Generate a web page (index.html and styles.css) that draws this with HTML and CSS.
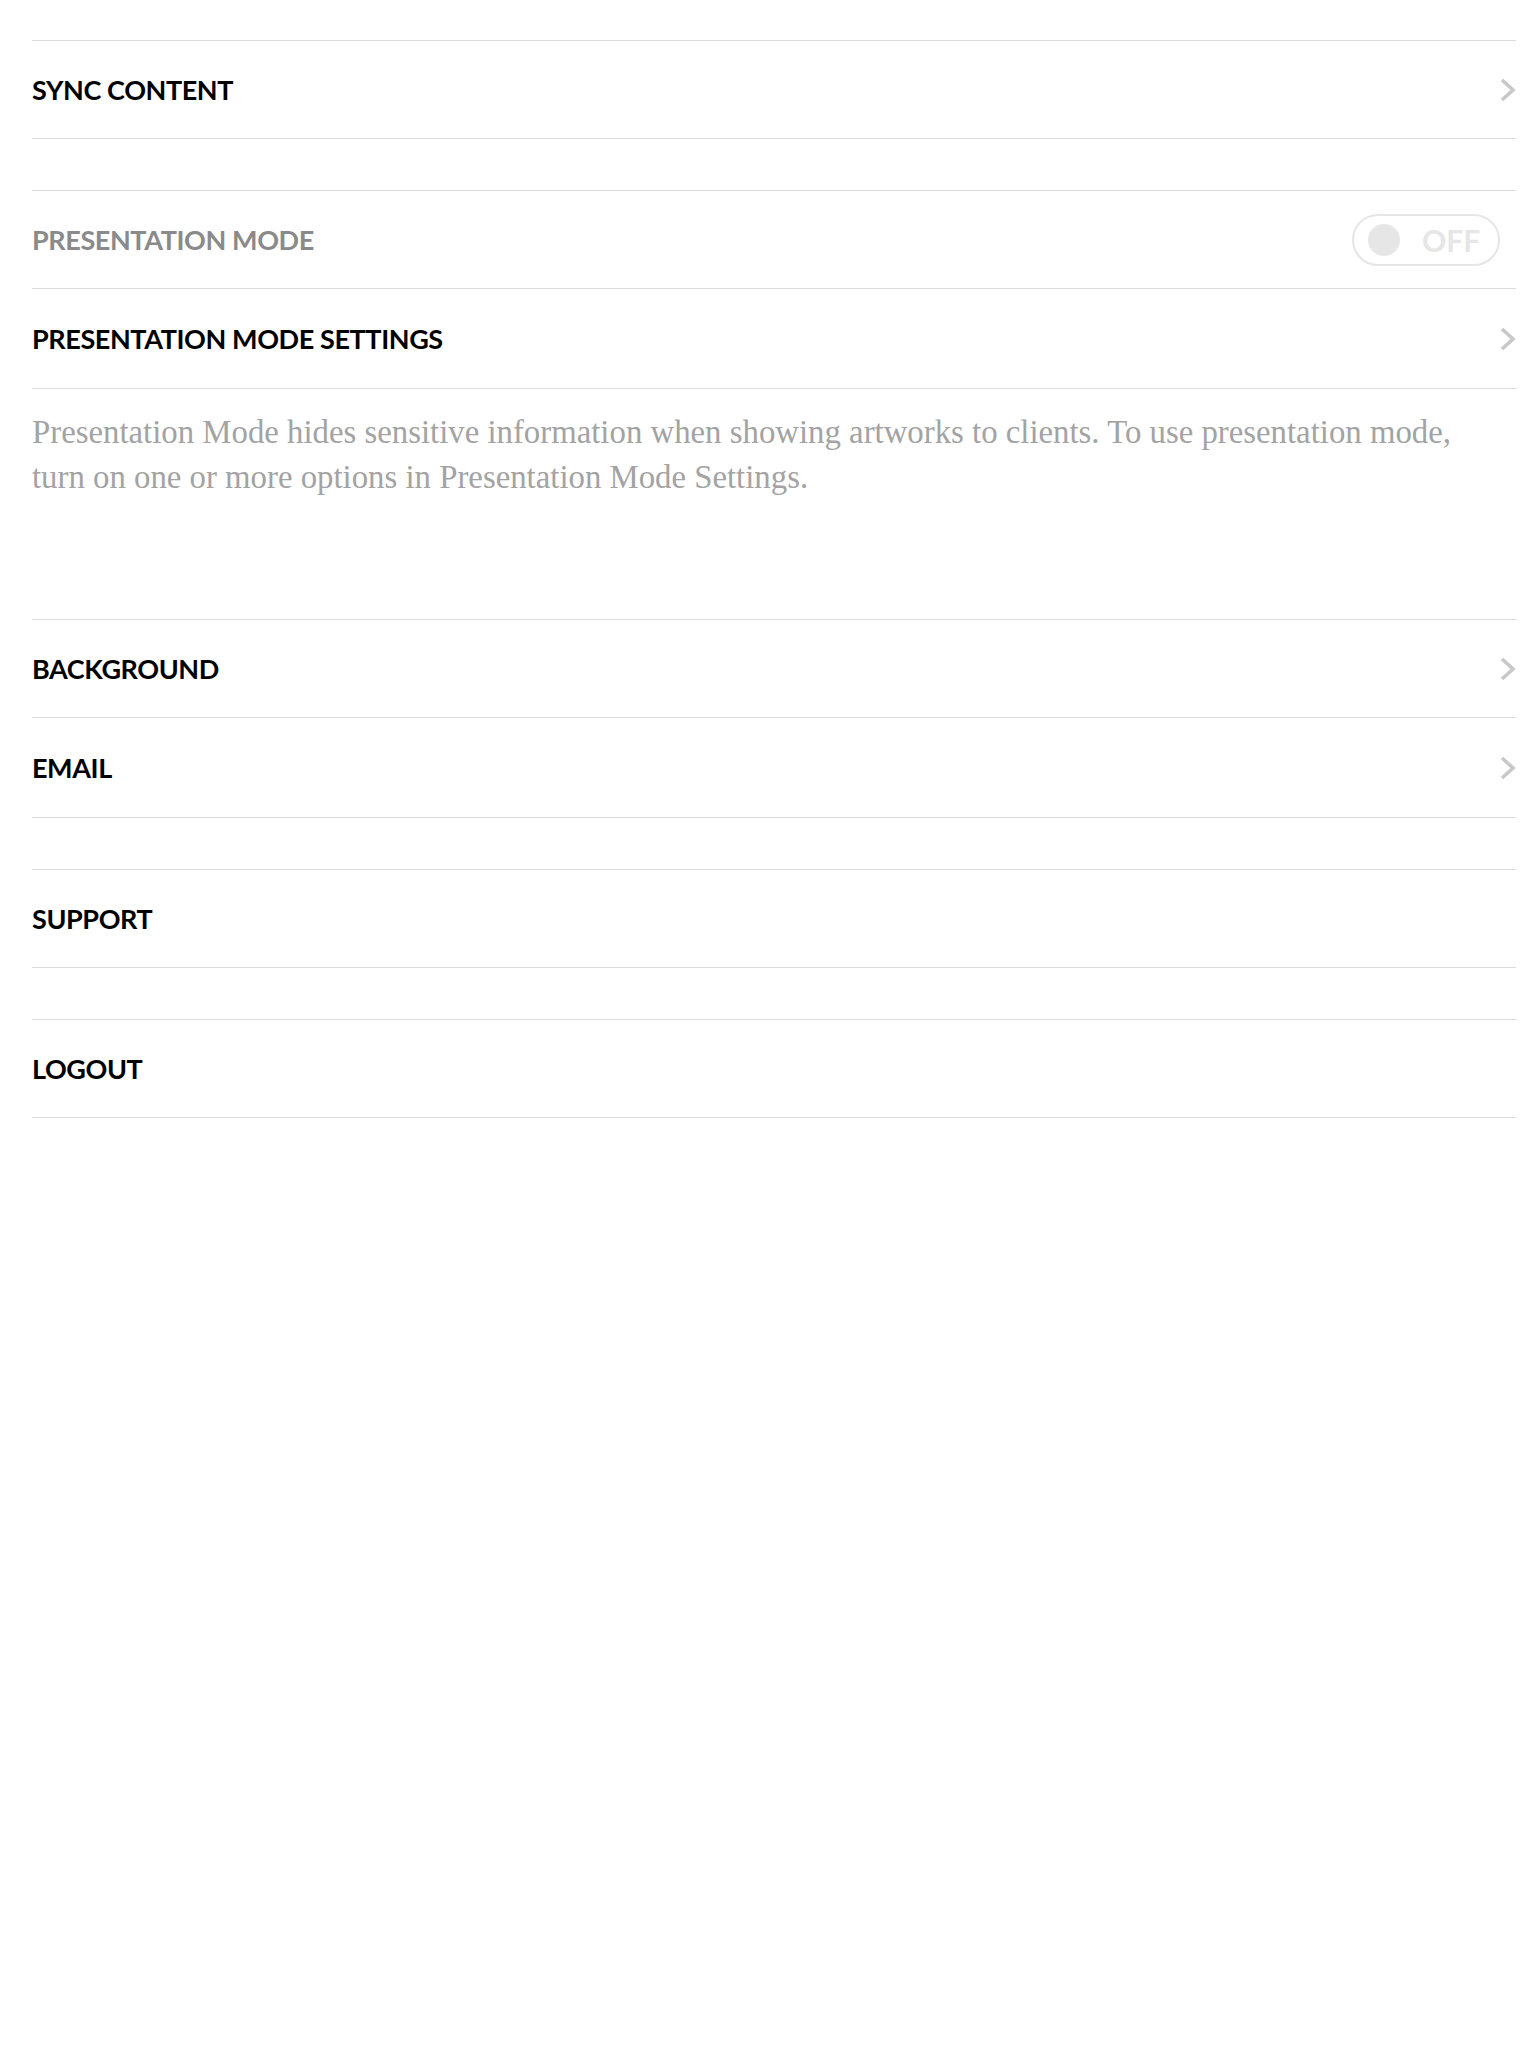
FILE: index.html
```html
<!DOCTYPE html>
<html>
<head>
<meta charset="utf-8">
<link rel="stylesheet" href="styles.css">
</head>
<body>
<div class="page">
  <div class="group first">
    <div class="row">
      <span class="label">SYNC CONTENT</span>
      <svg class="chev" viewBox="0 0 16 24" width="16" height="24"><polyline points="2,2 13,12 2,22" /></svg>
    </div>
  </div>

  <div class="group">
    <div class="row">
      <span class="label muted">PRESENTATION MODE</span>
      <div class="toggle"><span class="knob"></span><span class="toggle-text">OFF</span></div>
    </div>
    <div class="row tall">
      <span class="label">PRESENTATION MODE SETTINGS</span>
      <svg class="chev" viewBox="0 0 16 24" width="16" height="24"><polyline points="2,2 13,12 2,22" /></svg>
    </div>
    <p class="note">Presentation Mode hides sensitive information when showing artworks to clients. To use presentation mode, turn on one or more options in Presentation Mode Settings.</p>
  </div>

  <div class="group continued">
    <div class="row">
      <span class="label">BACKGROUND</span>
      <svg class="chev" viewBox="0 0 16 24" width="16" height="24"><polyline points="2,2 13,12 2,22" /></svg>
    </div>
    <div class="row tall">
      <span class="label">EMAIL</span>
      <svg class="chev" viewBox="0 0 16 24" width="16" height="24"><polyline points="2,2 13,12 2,22" /></svg>
    </div>
  </div>

  <div class="group">
    <div class="row">
      <span class="label">SUPPORT</span>
    </div>
  </div>

  <div class="group">
    <div class="row">
      <span class="label">LOGOUT</span>
    </div>
  </div>
</div>
</body>
</html>
```

FILE: styles.css
```css
html, body {
  margin: 0;
  padding: 0;
  background: #ffffff;
}

.page {
  padding: 40px 20px 0 32px;
  font-family: "Lato", "Liberation Sans", sans-serif;
}

.group {
  border-top: 1px solid #dcdcdc;
  margin-top: 51px;
}

.group.first {
  margin-top: 0;
}

.group.continued {
  border-top: 1px solid #dcdcdc;
  margin-top: 0;
}

.row {
  display: flex;
  align-items: center;
  justify-content: space-between;
  height: 97px;
  border-bottom: 1px solid #dcdcdc;
}

.row.tall {
  height: 99px;
}

.label {
  font-size: 27px;
  font-weight: 700;
  color: #000000;
  letter-spacing: -0.4px;
}

.label.muted {
  color: #8a8a8a;
}

.chev {
  display: block;
  flex: none;
}

.chev polyline {
  fill: none;
  stroke: #c8c8c8;
  stroke-width: 3.6;
  stroke-linecap: butt;
  stroke-linejoin: miter;
}

.toggle {
  box-sizing: border-box;
  width: 148px;
  height: 52px;
  margin-right: 16px;
  border: 2px solid #e6e6e6;
  border-radius: 26px;
  display: flex;
  align-items: center;
  padding-left: 14px;
  gap: 22px;
}

.knob {
  width: 32px;
  height: 32px;
  border-radius: 50%;
  background: #e6e6e6;
  flex: none;
}

.toggle-text {
  font-size: 30px;
  font-weight: 700;
  color: #e6e6e6;
  line-height: 1;
}

.note {
  margin: 0;
  padding: 21px 50px 119px 0;
  font-family: "Liberation Serif", serif;
  font-size: 32.8px;
  line-height: 45px;
  color: #a3a3a3;
}
```
